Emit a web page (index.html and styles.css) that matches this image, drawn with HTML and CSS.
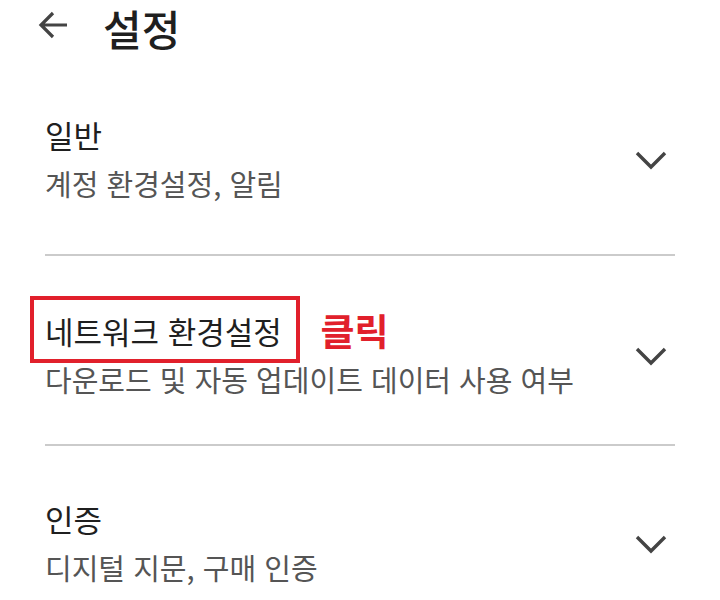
FILE: index.html
```html
<!DOCTYPE html>
<html lang="ko">
<head>
    <meta charset="UTF-8">
    <meta name="viewport" content="width=device-width, initial-scale=1.0">
    <title>설정</title>
    <link rel="stylesheet" href="styles.css">
</head>
<body>

<div class="topbar">
    <svg class="back" width="32" height="28" viewBox="0 0 32 28">
        <path d="M30 14H4M16 2L4 14l12 12" fill="none" stroke="#444" stroke-width="3.2"/>
    </svg>
    <h1>설정</h1>
</div>

<div class="list">
    <div class="item">
        <div class="texts">
            <div class="title">일반</div>
            <div class="sub">계정 환경설정, 알림</div>
        </div>
        <svg class="chev" width="32" height="20" viewBox="0 0 32 20">
            <path d="M2 3l14 14L30 3" fill="none" stroke="#444" stroke-width="3.4"/>
        </svg>
    </div>

    <div class="item">
        <div class="texts">
            <div class="title">
                <span class="marked">네트워크 환경설정</span>
                <span class="note">클릭</span>
            </div>
            <div class="sub">다운로드 및 자동 업데이트 데이터 사용 여부</div>
        </div>
        <svg class="chev" width="32" height="20" viewBox="0 0 32 20">
            <path d="M2 3l14 14L30 3" fill="none" stroke="#444" stroke-width="3.4"/>
        </svg>
    </div>

    <div class="item">
        <div class="texts">
            <div class="title">인증</div>
            <div class="sub">디지털 지문, 구매 인증</div>
        </div>
        <svg class="chev" width="32" height="20" viewBox="0 0 32 20">
            <path d="M2 3l14 14L30 3" fill="none" stroke="#444" stroke-width="3.4"/>
        </svg>
    </div>
</div>

</body>
</html>
```

FILE: styles.css
```css
body {
    margin: 0;
    background: #fff;
    font-family: "Noto Sans CJK KR", "Noto Sans", sans-serif;
    color: #1f1f1f;
    overflow: hidden;
}
.topbar {
    display: flex;
    align-items: flex-start;
    padding: 0 0 0 37px;
}
.back {
    margin-top: 11px;
}
h1 {
    margin: 0 0 0 34px;
    font-size: 42px;
    font-weight: 500;
    line-height: 56px;
    margin-top: 0;
}
.list {
    padding: 0 45px;
}
.item {
    display: flex;
    align-items: center;
    border-bottom: 2px solid #cbcbcb;
    padding: 53px 0 46px;
}
.item:first-child {
    padding: 58px 0 52px;
}
.item:last-child {
    border-bottom: none;
    padding-top: 52px;
}
.texts {
    flex: 1;
}
.title {
    font-size: 31px;
    line-height: 42px;
    color: #1f1f1f;
}
.sub {
    margin-top: 8px;
    font-size: 29px;
    line-height: 38px;
    color: #555;
}
.chev {
    margin-right: 8px;
    margin-top: 4px;
}
.marked {
    position: relative;
}
.marked::before {
    content: "";
    position: absolute;
    left: -15px;
    right: -18px;
    top: -12px;
    bottom: -10px;
    border: 4px solid #e1202b;
}
.note {
    margin-left: 30px;
    color: #e1202b;
    font-weight: 700;
    font-size: 37px;
    vertical-align: -2px;
}
```
